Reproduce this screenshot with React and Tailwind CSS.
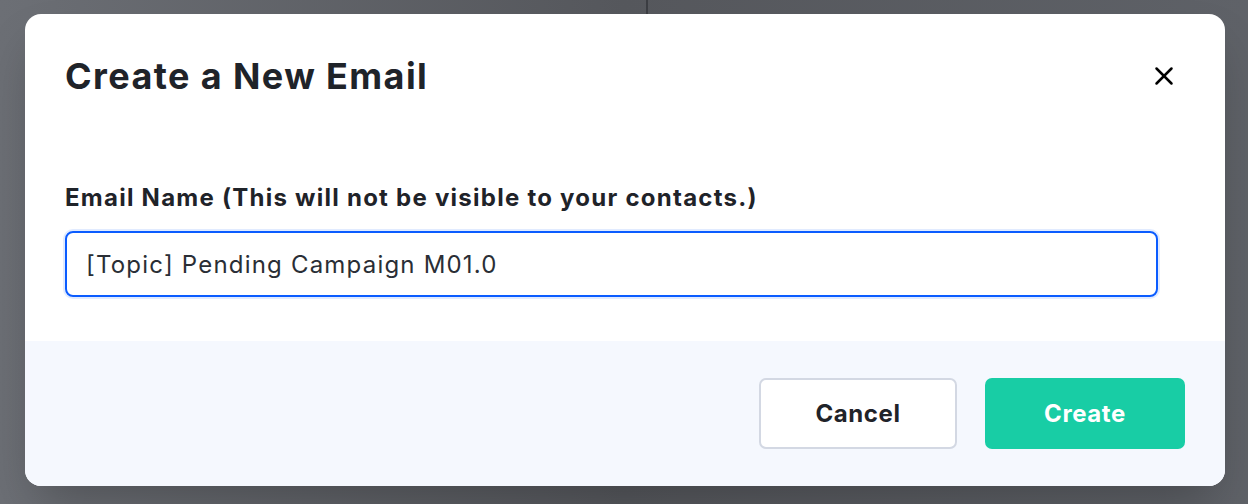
import React, { useState } from 'react';
import { X } from 'lucide-react';

const font = { fontFamily: 'Inter, "Noto Sans", sans-serif' };

const App = () => {
  const [name, setName] = useState('[Topic] Pending Campaign M01.0');

  return (
    <div
      className="w-[1248px] h-[504px] bg-gradient-to-r from-[#6c6f75] via-[#56585d] to-[#5f6268] flex flex-col"
      style={font}
    >
      {/* page behind the overlay */}
      <div className="h-[14px] flex justify-center shrink-0">
        <div className="w-[2px] h-full bg-[#3c3e43] ml-[46px]" />
      </div>

      <div className="mx-[25px] w-[1200px] h-[472px] bg-white rounded-[16px] shadow-2xl overflow-hidden flex flex-col">
        <div className="flex items-center justify-between pl-[40px] pr-[46px] pt-[40px]">
          <h1 className="text-[36px] leading-[44px] font-bold tracking-[1.4px] text-[#1f2329]">Create a New Email</h1>
          <button className="text-black">
            <X className="w-[30px] h-[30px]" strokeWidth={2} />
          </button>
        </div>

        <div className="px-[40px] pt-[85px] pb-[44px]">
          <label className="block text-[24px] leading-[30px] font-bold tracking-[1.25px] text-[#1f2329] mb-[18px]">
            Email Name (This will not be visible to your contacts.)
          </label>
          <input
            autoFocus
            value={name}
            onChange={(e) => setName(e.target.value)}
            className="w-[1093px] h-[66px] px-[19px] border-2 border-[#0b5cff] rounded-[8px] text-[24px] tracking-[1.2px] text-[#2a2e35] outline-none shadow-[0_0_0_2px_rgba(11,92,255,0.12)]"
            style={font}
          />
        </div>

        <div className="flex-1 bg-[#f5f8fe] flex justify-end items-start gap-[28px] pt-[37px] pr-[40px]">
          <button className="w-[198px] h-[71px] bg-white border-2 border-[#d3d8e3] rounded-[7px] text-[24px] font-bold tracking-[0.6px] text-[#1f2329]">
            Cancel
          </button>
          <button className="w-[200px] h-[71px] bg-[#18cda5] rounded-[7px] text-[24px] font-bold tracking-[0.6px] text-white">
            Create
          </button>
        </div>
      </div>
    </div>
  );
};

export default App;
